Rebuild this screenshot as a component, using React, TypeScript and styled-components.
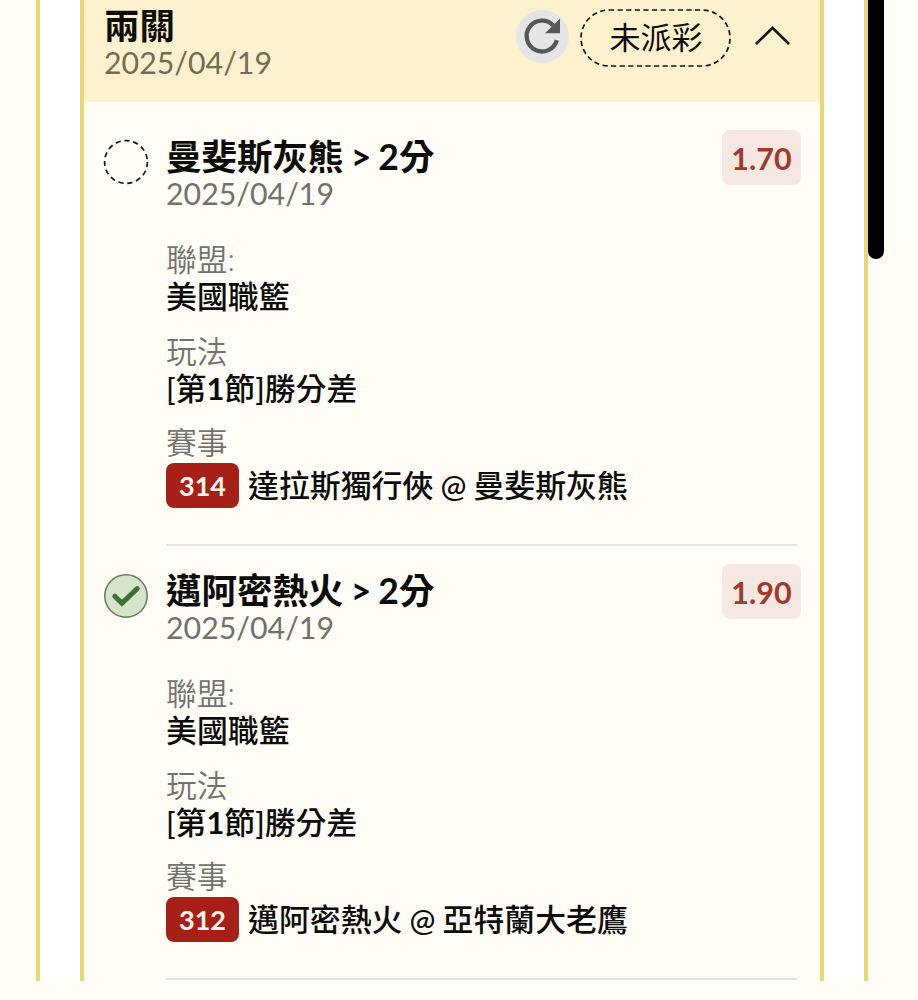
import React from "react";
import styled, { createGlobalStyle } from "styled-components";

const GlobalStyle = createGlobalStyle`
  * { box-sizing: border-box; }
  body {
    margin: 0;
    background: #fffdf5;
    color: #0c0c0a;
    font-family: Lato, "Noto Sans CJK TC", sans-serif;
    overflow: hidden;
  }
`;

const Page = styled.main`
  position: relative;
  width: 918px;
  height: 1000px;
  padding-left: 36px;
`;

const Panel = styled.section`
  width: 832px;
  height: 981px;
  padding: 0 40px;
  background: #fff;
  border: solid #ead972;
  border-width: 0 4px;
`;

const Card = styled.article`
  height: 981px;
  background: #fffdf6;
  border: solid #ead972;
  border-width: 0 4px;
`;

const Header = styled.header`
  display: flex;
  align-items: flex-start;
  height: 102px;
  padding: 8px 29px 0 20px;
  background: #fcf1cd;
`;

const Heading = styled.div`
  flex: 1;
`;

const Title = styled.h2`
  height: 36px;
  margin: 0;
  font-size: 35.5px;
  font-weight: 700;
  line-height: 35px;
  word-spacing: -1.5px;
  white-space: nowrap;
`;

const DateText = styled.time<{ $warm?: boolean }>`
  display: block;
  height: 37px;
  font-size: 30.3px;
  line-height: 37px;
  color: ${(p) => (p.$warm ? "#726c55" : "#72716c")};
`;

const RefreshButton = styled.button`
  display: flex;
  align-items: center;
  justify-content: center;
  width: 53px;
  height: 53px;
  margin-top: 2px;
  padding: 0;
  border: 0;
  border-radius: 50%;
  background: #e4e5e7;
`;

const StatusPill = styled.div`
  position: relative;
  width: 151px;
  height: 58px;
  margin: 1px 23px 0 11px;
  padding-left: 1px;
  font-size: 31px;
  line-height: 57px;
  text-align: center;

  svg {
    position: absolute;
    inset: 0;
  }
`;

const ToggleButton = styled.button`
  display: flex;
  width: 37px;
  height: 22px;
  margin-top: 17px;
  padding: 0;
  border: 0;
  background: none;
`;

const Entries = styled.div`
  padding-top: 10px;
`;

const Entry = styled.div`
  display: flex;
  height: 434px;
  padding: 18px 19px 0 19px;
`;

const StatusMark = styled.div`
  flex: none;
  width: 46px;
  height: 46px;
  margin: 9px 17px 0 0;
`;

const EntryBody = styled.div`
  display: flex;
  flex-direction: column;
  flex: none;
  width: 631px;
  height: 416px;
  margin-right: -79px;
  padding-top: 9px;
  border-bottom: 2px solid #e4e2dc;
`;

const Fields = styled.dl`
  margin: 29px 0 0;
`;

const Field = styled.div`
  margin-bottom: 17.5px;
`;

const Label = styled.dt`
  height: 37px;
  font-size: 30.8px;
  font-weight: 350;
  line-height: 37px;
  color: #73726d;
`;

const Value = styled.dd`
  display: flex;
  align-items: center;
  height: 37px;
  margin: 0;
  font-size: 30.9px;
  font-weight: 500;
  line-height: 37px;
  word-spacing: -0.7px;
  white-space: pre;

  b {
    font-weight: 700;
  }
`;

const MatchValue = styled(Value)`
  height: 45px;
  margin-top: 2px;
`;

const MatchNumber = styled.span`
  width: 73px;
  height: 45px;
  margin-right: 9px;
  border-radius: 8px;
  background: #a62017;
  color: #fff6ee;
  font-size: 27px;
  font-weight: 700;
  line-height: 45px;
  text-align: center;
`;

const Odds = styled.div`
  position: relative;
  flex: none;
  width: 79px;
  height: 55px;
  margin-left: 4px;
  border-radius: 8px;
  background: #f5e7e1;
  color: #a03a2c;
  font-size: 30.5px;
  font-weight: 700;
  line-height: 56px;
  text-align: center;
`;

const Scrollbar = styled.div`
  position: absolute;
  top: 0;
  left: 868px;
  width: 16px;
  height: 259px;
  border-radius: 0 0 8px 8px;
  background: #000;
`;

const RefreshIcon = () => (
  <svg width="53" height="53" viewBox="0 0 53 53">
    <path d="M37.2 15.4A15.4 15.4 0 1 0 40.9 30.2" fill="none" stroke="#555856" strokeWidth="4.3" />
    <path d="M44 8.5V23.3H29Z" fill="#555856" />
  </svg>
);

const PendingIcon = () => (
  <svg width="46" height="46" viewBox="0 0 46 46">
    <circle cx="23" cy="23" r="21.4" fill="none" stroke="#171711" strokeWidth="1.7" strokeDasharray="5.2 3.76" />
  </svg>
);

const WonIcon = () => (
  <svg width="46" height="46" viewBox="0 0 46 46">
    <circle cx="23" cy="23" r="21.2" fill="#d6e4cc" stroke="#5d8053" strokeWidth="1.5" />
    <path d="M11.8 23.2 18.9 30.3 34.2 15.6" fill="none" stroke="#3e7134" strokeWidth="5" strokeLinecap="round" />
  </svg>
);

const ChevronUp = () => (
  <svg width="37" height="22" viewBox="0 0 37 22">
    <path d="M2 19 18.5 2.8 35 19" fill="none" stroke="#151512" strokeWidth="2.7" />
  </svg>
);

interface Leg {
  pick: string;
  odds: string;
  number: string;
  match: string;
  won: boolean;
}

const legs: Leg[] = [
  { pick: "曼斐斯灰熊 > 2分", odds: "1.70", number: "314", match: "達拉斯獨行俠 @ 曼斐斯灰熊", won: false },
  { pick: "邁阿密熱火 > 2分", odds: "1.90", number: "312", match: "邁阿密熱火 @ 亞特蘭大老鷹", won: true },
];

const LegEntry = ({ leg }: { leg: Leg }) => (
  <Entry>
    <StatusMark>{leg.won ? <WonIcon /> : <PendingIcon />}</StatusMark>
    <EntryBody>
      <Title>{leg.pick}</Title>
      <DateText>2025/04/19</DateText>
      <Fields>
        <Field>
          <Label>聯盟:</Label>
          <Value>美國職籃</Value>
        </Field>
        <Field>
          <Label>玩法</Label>
          <Value>
            <span>[第<b>1</b>節]勝分差</span>
          </Value>
        </Field>
        <Field>
          <Label>賽事</Label>
          <MatchValue>
            <MatchNumber>{leg.number}</MatchNumber>
            {leg.match}
          </MatchValue>
        </Field>
      </Fields>
    </EntryBody>
    <Odds>{leg.odds}</Odds>
  </Entry>
);

export default function App() {
  return (
    <Page>
      <GlobalStyle />
      <Panel>
        <Card>
          <Header>
            <Heading>
              <Title>兩關</Title>
              <DateText $warm>2025/04/19</DateText>
            </Heading>
            <RefreshButton aria-label="refresh">
              <RefreshIcon />
            </RefreshButton>
            <StatusPill>
              <svg width="151" height="58" viewBox="0 0 151 58">
                <rect x="1" y="1" width="149" height="56" rx="28" fill="none" stroke="#171711" strokeWidth="1.7" strokeDasharray="5.2 3.4" />
              </svg>
              未派彩
            </StatusPill>
            <ToggleButton aria-label="collapse">
              <ChevronUp />
            </ToggleButton>
          </Header>
          <Entries>
            {legs.map((leg) => (
              <LegEntry key={leg.number} leg={leg} />
            ))}
          </Entries>
        </Card>
      </Panel>
      <Scrollbar />
    </Page>
  );
}
